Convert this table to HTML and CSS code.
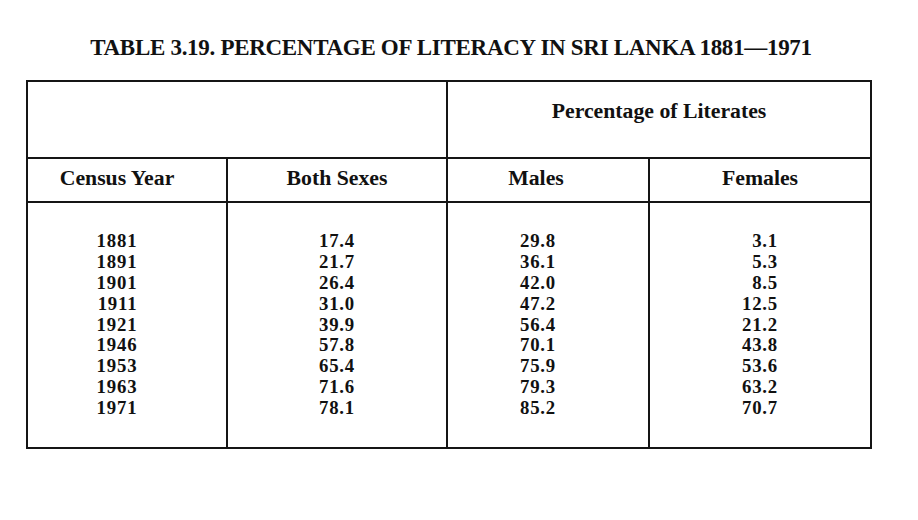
FILE: index.html
```html
<!DOCTYPE html>
<html lang="en">
<head>
<meta charset="utf-8">
<title>Table 3.19</title>
<link rel="stylesheet" href="styles.css">
</head>
<body>
<div class="page">
  <h1 class="title">TABLE 3.19. PERCENTAGE OF LITERACY IN SRI LANKA 1881—1971</h1>
  <table class="lit">
    <colgroup>
      <col class="c1"><col class="c2"><col class="c3"><col class="c4">
    </colgroup>
    <thead>
      <tr class="r-group">
        <th colspan="2" class="blank"></th>
        <th colspan="2" class="group">Percentage of Literates</th>
      </tr>
      <tr class="r-head">
        <th class="h-year">Census Year</th>
        <th class="h-both">Both Sexes</th>
        <th class="h-male">Males</th>
        <th class="h-female">Females</th>
      </tr>
    </thead>
    <tbody>
      <tr class="r-body">
        <td class="d-year"><div class="nums"><div class="n">1881</div><div class="n">1891</div><div class="n">1901</div><div class="n">1911</div><div class="n">1921</div><div class="n">1946</div><div class="n">1953</div><div class="n">1963</div><div class="n">1971</div></div></td>
        <td class="d-both"><div class="nums"><div class="n">17.4</div><div class="n">21.7</div><div class="n">26.4</div><div class="n">31.0</div><div class="n">39.9</div><div class="n">57.8</div><div class="n">65.4</div><div class="n">71.6</div><div class="n">78.1</div></div></td>
        <td class="d-male"><div class="nums"><div class="n">29.8</div><div class="n">36.1</div><div class="n">42.0</div><div class="n">47.2</div><div class="n">56.4</div><div class="n">70.1</div><div class="n">75.9</div><div class="n">79.3</div><div class="n">85.2</div></div></td>
        <td class="d-female"><div class="nums"><div class="n">3.1</div><div class="n">5.3</div><div class="n">8.5</div><div class="n">12.5</div><div class="n">21.2</div><div class="n">43.8</div><div class="n">53.6</div><div class="n">63.2</div><div class="n">70.7</div></div></td>
      </tr>
    </tbody>
  </table>
</div>
</body>
</html>
```
FILE: styles.css
```css
html, body {
  margin: 0;
  padding: 0;
  background: #ffffff;
}
body {
  font-family: "Liberation Serif", "Times New Roman", serif;
  color: #111111;
}
.page {
  width: 844px;
  margin-left: 26px;
  padding-top: 34px;
}
.title {
  margin: 0 0 18px 0;
  font-size: 23px;
  line-height: 28px;
  letter-spacing: -0.3px;
  font-weight: bold;
  text-align: center;
  padding-left: 6px;
}
.lit {
  width: 844px;
  border-collapse: collapse;
  table-layout: fixed;
  border: 2px solid #151515;
}
.c1 { width: 200px; }
.c2 { width: 220px; }
.c3 { width: 202px; }
.c4 { width: 222px; }
.lit th {
  font-weight: bold;
  font-size: 21.75px;
  line-height: 26px;
  padding: 0;
  text-align: center;
  vertical-align: top;
}
.r-group th {
  height: 77px;
  box-sizing: border-box;
}
.lit .group {
  border-left: 2px solid #151515;
  padding-top: 16px;
}
.r-head th {
  height: 44px;
  box-sizing: border-box;
  border-top: 2px solid #151515;
  border-bottom: 2px solid #151515;
}
.lit .r-head th {
  padding-top: 6px;
}
.r-head th + th,
.r-body td + td {
  border-left: 2px solid #151515;
}
.lit .h-year { padding-right: 20px; }
.lit .h-male { padding-right: 24px; }
.r-body td {
  height: 246px;
  box-sizing: border-box;
  padding: 28px 0 0 0;
  vertical-align: top;
  text-align: center;
  font-size: 18.8px;
  letter-spacing: 0.8px;
  font-weight: bold;
}
.r-body .d-year { padding-right: 20px; }
.r-body .d-male { padding-right: 20px; }
.nums {
  display: inline-block;
  text-align: right;
}
.n {
  height: 20.875px;
  line-height: 20.875px;
}
```
